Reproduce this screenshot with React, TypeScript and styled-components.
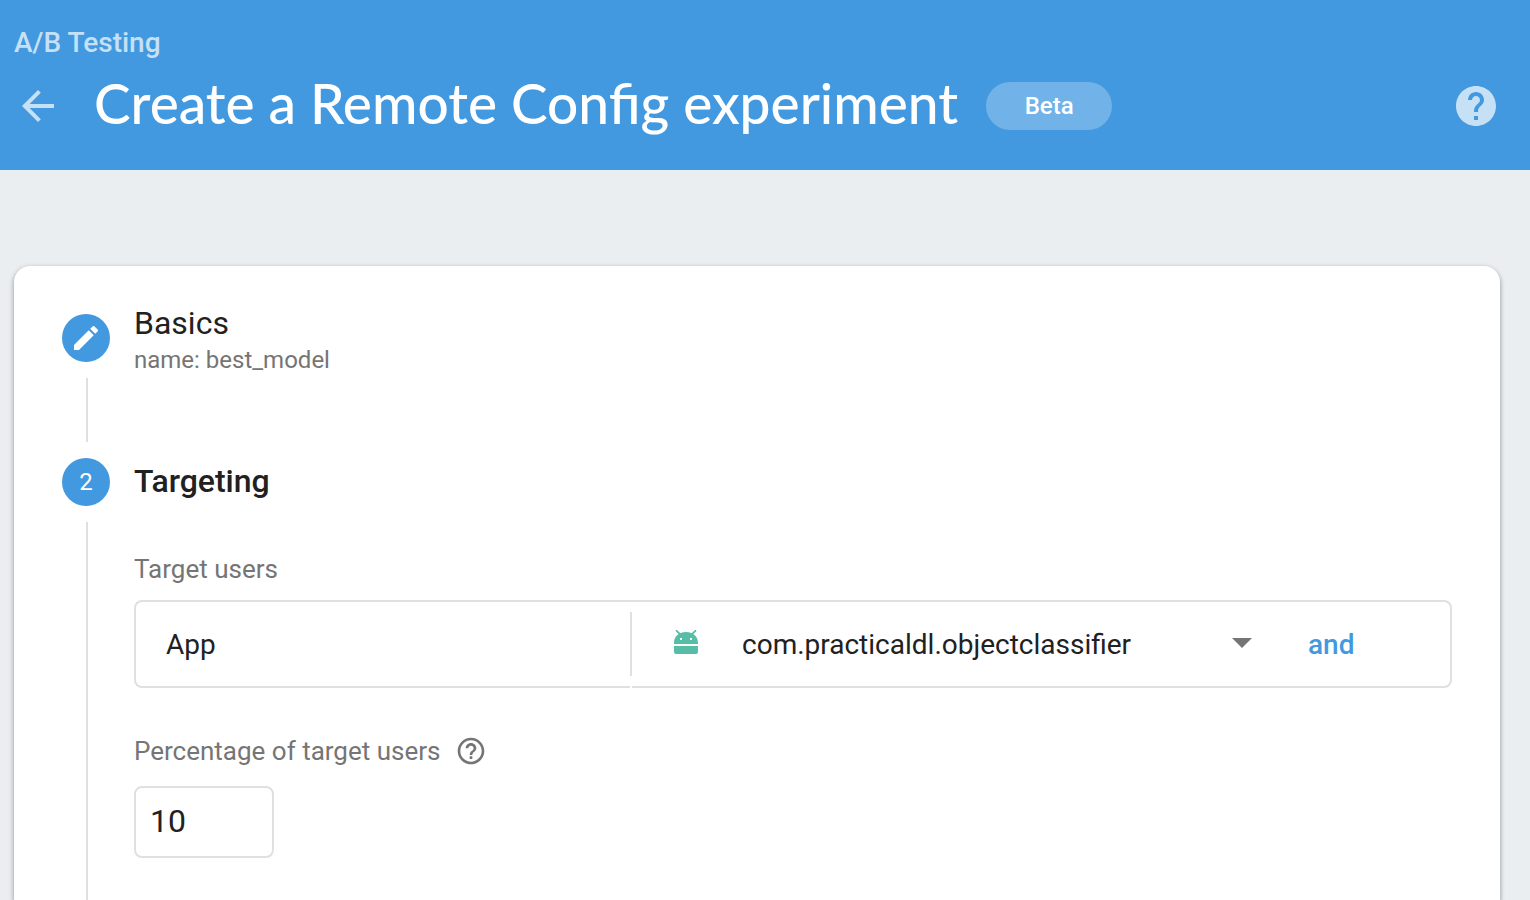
import React, { useState } from "react";
import styled, { createGlobalStyle } from "styled-components";

const blue = "#4299e0";
const ink = "#212121";
const muted = "#757575";
const line = "#e0e0e0";
const paleBlue = "#c6e0f5";

const GlobalStyle = createGlobalStyle`
  *, *::before, *::after { box-sizing: border-box; }
  body {
    margin: 0;
    background: #eaeef1;
    color: ${ink};
    font-family: Roboto, "Liberation Sans", sans-serif;
  }
  h1, h2, p { margin: 0; }
  button, input, select { font: inherit; color: inherit; }
`;

const Page = styled.div`
  display: flex;
  flex-direction: column;
  min-height: 100vh;
`;

const Header = styled.header`
  padding: 28px 30px 40px 14px;
  background: ${blue};
  color: #fff;
`;

const Breadcrumb = styled.a`
  display: block;
  width: fit-content;
  margin-bottom: 24px;
  color: ${paleBlue};
  font-size: 28px;
  font-weight: 500;
  line-height: 30px;
  text-decoration: none;
`;

const TitleRow = styled.div`
  display: flex;
  align-items: center;
  height: 48px;
`;

const IconButton = styled.button<{ $tone: string }>`
  display: flex;
  flex: none;
  padding: 0;
  border: 0;
  background: none;
  color: ${(p) => p.$tone};
  cursor: pointer;
`;

const PageTitle = styled.h1`
  align-self: flex-start;
  margin: 0 28px 0 32px;
  font-family: Lato, Roboto, sans-serif;
  font-size: 55px;
  font-weight: 500;
  line-height: 42px;
  white-space: nowrap;
`;

const Badge = styled.span`
  min-width: 126px;
  border-radius: 24px;
  background: #71b2e8;
  font-size: 24px;
  font-weight: 500;
  line-height: 48px;
  text-align: center;
`;

const HeaderEnd = styled.div`
  display: flex;
  margin-left: auto;
`;

const Card = styled.main`
  display: flex;
  flex: 1;
  flex-direction: column;
  margin: 96px 30px 0 14px;
  padding: 32px 48px 0;
  border-radius: 16px 16px 0 0;
  background: #fff;
  box-shadow: 0 2px 4px rgba(0, 0, 0, 0.28), 0 2px 6px rgba(0, 0, 0, 0.14);
`;

const Step = styled.section<{ $grow?: boolean }>`
  display: grid;
  grid-template-columns: 48px minmax(0, 1fr);
  column-gap: 24px;
  flex: ${(p) => (p.$grow ? "1" : "none")};
`;

const Rail = styled.div`
  display: flex;
  flex-direction: column;
  gap: 16px;
  padding-top: 16px;
`;

const Marker = styled.div`
  display: flex;
  align-items: center;
  justify-content: center;
  width: 48px;
  height: 48px;
  border-radius: 50%;
  background: ${blue};
  color: #fff;
  font-size: 24px;
`;

const Connector = styled.div`
  flex: 1;
  width: 2px;
  min-height: 64px;
  margin-left: 24px;
  background: ${line};
`;

const StepBody = styled.div<{ $inset?: boolean }>`
  padding-top: ${(p) => (p.$inset ? 14 : 0)}px;
`;

const StepTitle = styled.h2<{ $active?: boolean }>`
  font-size: 32px;
  font-weight: ${(p) => (p.$active ? 500 : 400)};
  line-height: 50px;
`;

const StepSummary = styled.p`
  color: ${muted};
  font-size: 24px;
  line-height: 24px;
`;

const Field = styled.div`
  margin-top: 47px;
`;

const LabelRow = styled.div<{ $space: number }>`
  display: flex;
  align-items: center;
  gap: 15px;
  margin-bottom: ${(p) => p.$space}px;
  color: ${muted};
  font-size: 26px;
  line-height: 32px;
`;

const Condition = styled.div`
  display: grid;
  grid-template-columns: 496px 2px minmax(0, 1fr);
  min-height: 88px;
  font-size: 28px;
`;

const Subject = styled.label`
  display: flex;
  align-items: center;
  padding-left: 30px;
  border: 2px solid ${line};
  border-right: 0;
  border-radius: 8px 0 0 8px;
`;

const Divider = styled.div`
  padding-top: 10px;
  border-top: 2px solid ${line};

  &::before {
    content: "";
    display: block;
    height: 64px;
    background: ${line};
  }
`;

const Criteria = styled.div`
  display: flex;
  align-items: center;
  padding-left: 40px;
  border: 2px solid ${line};
  border-left: 0;
  border-radius: 0 8px 8px 0;
`;

const SelectBox = styled.div`
  display: grid;
  flex: 0 1 594px;
  grid-template-columns: 28px minmax(0, 1fr) 48px;
  align-items: center;

  > svg {
    grid-row: 1;
    pointer-events: none;
  }
  > svg:first-child { grid-column: 1; }
  > svg:last-child { grid-column: 3; }
`;

const AppSelect = styled.select`
  grid-row: 1;
  grid-column: 1 / -1;
  width: 100%;
  height: 64px;
  padding: 0 48px 0 70px;
  border: 0;
  background: none;
  appearance: none;
  cursor: pointer;
`;

const AndButton = styled.button`
  margin-left: 42px;
  padding: 0;
  border: 0;
  background: none;
  color: ${blue};
  font-weight: 500;
  cursor: pointer;
`;

const PercentInput = styled.input`
  display: block;
  width: 140px;
  height: 72px;
  padding: 0 14px 2px;
  border: 2px solid ${line};
  border-radius: 8px;
  background: #fff;
  font-size: 32px;
`;

const BackIcon = () => (
  <svg width="48" height="48" viewBox="0 0 24 24" fill="currentColor" aria-hidden="true">
    <path d="M20 11H7.83l5.59-5.59L12 4l-8 8 8 8 1.41-1.41L7.83 13H20v-2z" />
  </svg>
);

const HelpIcon = () => (
  <svg width="48" height="48" viewBox="0 0 24 24" fill="currentColor" aria-hidden="true">
    <path d="M12 2C6.48 2 2 6.48 2 12s4.48 10 10 10 10-4.48 10-10S17.52 2 12 2zm1 17h-2v-2h2v2zm2.07-7.75l-.9.92C13.45 12.9 13 13.5 13 15h-2v-.5c0-1.1.45-2.1 1.17-2.83l1.24-1.26c.37-.36.59-.86.59-1.41 0-1.1-.9-2-2-2s-2 .9-2 2H8c0-2.21 1.79-4 4-4s4 1.79 4 4c0 .88-.36 1.68-.93 2.25z" />
  </svg>
);

const HelpOutlineIcon = () => (
  <svg width="32" height="32" viewBox="0 0 24 24" fill="currentColor" aria-hidden="true">
    <path d="M11 18h2v-2h-2v2zm1-16C6.48 2 2 6.48 2 12s4.48 10 10 10 10-4.48 10-10S17.52 2 12 2zm0 18c-4.41 0-8-3.59-8-8s3.59-8 8-8 8 3.59 8 8-3.59 8-8 8zm0-14c-2.21 0-4 1.79-4 4h2c0-1.1.9-2 2-2s2 .9 2 2c0 2-3 1.75-3 5h2c0-2.25 3-2.5 3-5 0-2.21-1.79-4-4-4z" />
  </svg>
);

const PencilIcon = () => (
  <svg width="32" height="32" viewBox="0 0 24 24" fill="currentColor" aria-hidden="true">
    <path d="M3 17.25V21h3.75L17.81 9.94l-3.75-3.75L3 17.25zM20.71 7.04c.39-.39.39-1.02 0-1.41l-2.34-2.34c-.39-.39-1.02-.39-1.41 0l-1.83 1.83 3.75 3.75 1.83-1.83z" />
  </svg>
);

const AndroidIcon = () => (
  <svg width="28" height="28" viewBox="0 0 28 28" fill="#56bda6" aria-hidden="true">
    <path d="M4.6 .8 8 4.2M23.4 .8 20 4.2" stroke="#56bda6" strokeWidth="1.8" strokeLinecap="round" />
    <path
      fillRule="evenodd"
      d="M2 13C2 6 7.2 2 14 2S26 6 26 13V14H2zM8 8v2h2v-2zM18 8v2h2v-2z"
    />
    <path d="M2 16H26V22a2 2 0 0 1-2 2H4a2 2 0 0 1-2-2z" />
  </svg>
);

const CaretIcon = () => (
  <svg width="48" height="48" viewBox="0 0 24 24" fill={muted} aria-hidden="true">
    <path d="M7 9l5 5 5-5z" />
  </svg>
);

export default function App() {
  const [percent, setPercent] = useState("10");

  return (
    <>
      <GlobalStyle />
      <Page>
        <Header>
          <Breadcrumb href="#ab-testing">A/B Testing</Breadcrumb>
          <TitleRow>
            <IconButton type="button" $tone={paleBlue} aria-label="Back">
              <BackIcon />
            </IconButton>
            <PageTitle>Create a Remote Config experiment</PageTitle>
            <Badge>Beta</Badge>
            <HeaderEnd>
              <IconButton type="button" $tone={paleBlue} aria-label="Help">
                <HelpIcon />
              </IconButton>
            </HeaderEnd>
          </TitleRow>
        </Header>

        <Card>
          <Step>
            <Rail>
              <Marker>
                <PencilIcon />
              </Marker>
              <Connector />
            </Rail>
            <StepBody>
              <StepTitle>Basics</StepTitle>
              <StepSummary>name: best_model</StepSummary>
            </StepBody>
          </Step>

          <Step $grow>
            <Rail>
              <Marker>2</Marker>
              <Connector />
            </Rail>
            <StepBody $inset>
              <StepTitle $active>Targeting</StepTitle>
              <Field>
                <LabelRow $space={15}>Target users</LabelRow>
                <Condition>
                  <Subject htmlFor="target-app">App</Subject>
                  <Divider />
                  <Criteria>
                    <SelectBox>
                      <AndroidIcon />
                      <AppSelect id="target-app">
                        <option>com.practicaldl.objectclassifier</option>
                      </AppSelect>
                      <CaretIcon />
                    </SelectBox>
                    <AndButton type="button">and</AndButton>
                  </Criteria>
                </Condition>
              </Field>
              <Field>
                <LabelRow $space={19}>
                  <label htmlFor="percentage">Percentage of target users</label>
                  <IconButton type="button" $tone={muted} aria-label="About the percentage">
                    <HelpOutlineIcon />
                  </IconButton>
                </LabelRow>
                <PercentInput
                  id="percentage"
                  type="text"
                  inputMode="numeric"
                  value={percent}
                  onChange={(e) => setPercent(e.target.value)}
                />
              </Field>
            </StepBody>
          </Step>
        </Card>
      </Page>
    </>
  );
}
